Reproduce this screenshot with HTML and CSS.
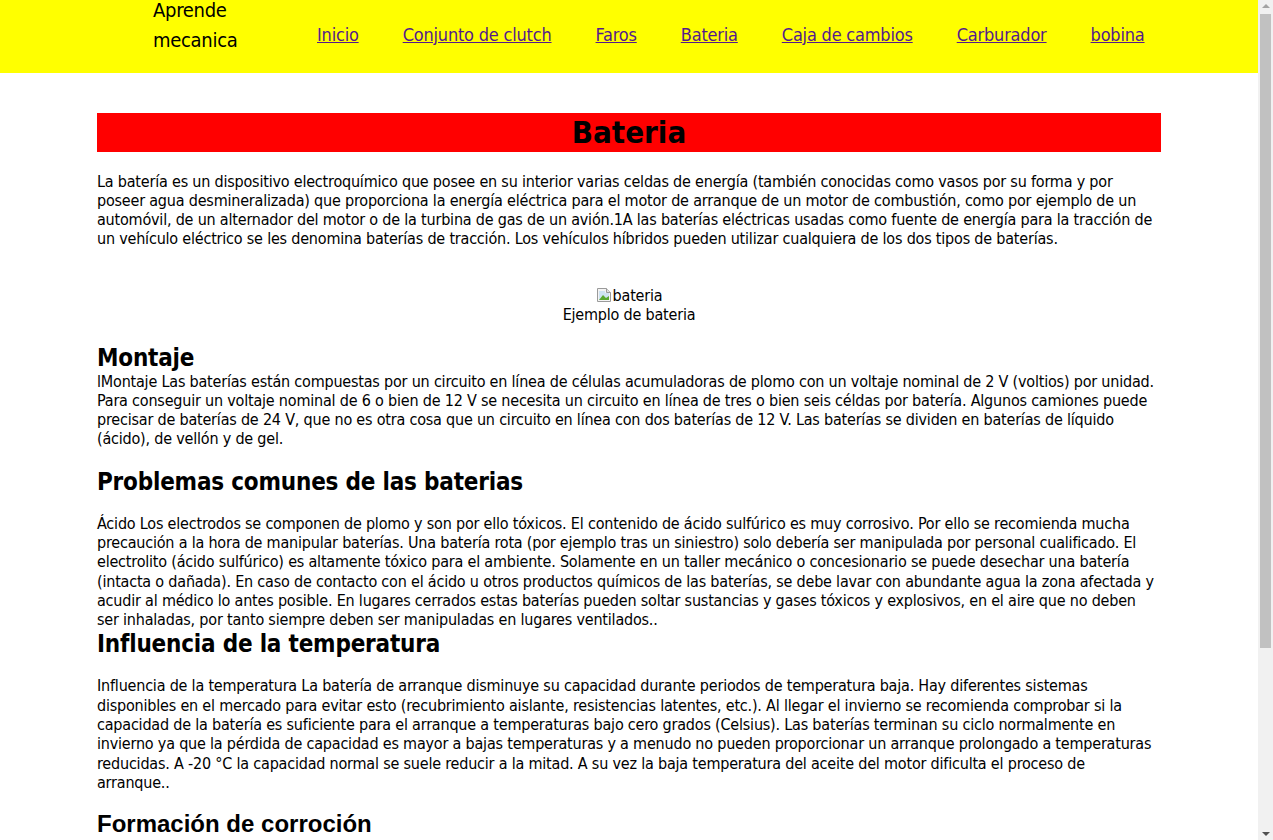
FILE: index.html
```html
<!DOCTYPE html>
<html lang="es">
<head>
<meta charset="utf-8">
<title>Bateria</title>
<link rel="stylesheet" href="styles.css">
</head>
<body>
<header class="topbar">
  <div class="brand">Aprende mecanica</div>
  <nav class="nav">
    <a href="#" class="nav-link">Inicio</a>
    <a href="#" class="nav-link">Conjunto de clutch</a>
    <a href="#" class="nav-link">Faros</a>
    <a href="#" class="nav-link">Bateria</a>
    <a href="#" class="nav-link">Caja de cambios</a>
    <a href="#" class="nav-link">Carburador</a>
    <a href="#" class="nav-link">bobina</a>
  </nav>
</header>
<main class="content">
  <h1 class="title">Bateria</h1>
  <p class="text">La batería es un dispositivo electroquímico que posee en su interior varias celdas de energía (también conocidas como vasos por su forma y por poseer agua desmineralizada) que proporciona la energía eléctrica para el motor de arranque de un motor de combustión, como por ejemplo de un automóvil, de un alternador del motor o de la turbina de gas de un avión.1A las baterías eléctricas usadas como fuente de energía para la tracción de un vehículo eléctrico se les denomina baterías de tracción. Los vehículos híbridos pueden utilizar cualquiera de los dos tipos de baterías.</p>
  <figure class="figure">
    <span class="broken"><svg class="broken-icon" width="16" height="16" viewBox="0 0 16 16"><path d="M1.5 1.5h9l4 4v9h-13z" fill="#f4f4f4" stroke="#9a9a9a"/><path d="M10.5 1.5v4h4" fill="#e0e0e0" stroke="#9a9a9a"/><path d="M3 4h6v2h4v7H3z" fill="#cfe3f3"/><path d="M3 13l4-5 3 3 3-2v4z" fill="#5aa830"/></svg>bateria</span>
    <figcaption>Ejemplo de bateria</figcaption>
  </figure>
  <h2 class="subtitle subtitle--tight-bottom">Montaje</h2>
  <p class="text">lMontaje Las baterías están compuestas por un circuito en línea de células acumuladoras de plomo con un voltaje nominal de 2 V (voltios) por unidad. Para conseguir un voltaje nominal de 6 o bien de 12 V se necesita un circuito en línea de tres o bien seis céldas por batería. Algunos camiones puede precisar de baterías de 24 V, que no es otra cosa que un circuito en línea con dos baterías de 12 V. Las baterías se dividen en baterías de líquido (ácido), de vellón y de gel.</p>
  <h2 class="subtitle">Problemas comunes de las baterias</h2>
  <p class="text">Ácido Los electrodos se componen de plomo y son por ello tóxicos. El contenido de ácido sulfúrico es muy corrosivo. Por ello se recomienda mucha precaución a la hora de manipular baterías. Una batería rota (por ejemplo tras un siniestro) solo debería ser manipulada por personal cualificado. El electrolito (ácido sulfúrico) es altamente tóxico para el ambiente. Solamente en un taller mecánico o concesionario se puede desechar una batería (intacta o dañada). En caso de contacto con el ácido u otros productos químicos de las baterías, se debe lavar con abundante agua la zona afectada y acudir al médico lo antes posible. En lugares cerrados estas baterías pueden soltar sustancias y gases tóxicos y explosivos, en el aire que no deben ser inhaladas, por tanto siempre deben ser manipuladas en lugares ventilados..</p>
  <h2 class="subtitle subtitle--tight-top">Influencia de la temperatura</h2>
  <p class="text">Influencia de la temperatura La batería de arranque disminuye su capacidad durante periodos de temperatura baja. Hay diferentes sistemas disponibles en el mercado para evitar esto (recubrimiento aislante, resistencias latentes, etc.). Al llegar el invierno se recomienda comprobar si la capacidad de la batería es suficiente para el arranque a temperaturas bajo cero grados (Celsius). Las baterías terminan su ciclo normalmente en invierno ya que la pérdida de capacidad es mayor a bajas temperaturas y a menudo no pueden proporcionar un arranque prolongado a temperaturas reducidas. A -20 °C la capacidad normal se suele reducir a la mitad. A su vez la baja temperatura del aceite del motor dificulta el proceso de arranque..</p>
  <h2 class="subtitle subtitle--alt">Formación de corroción</h2>
  <p class="text">Formación de corroción Los bornes de la batería pueden presentar corrosión con el paso del tiempo. Es recomendable limpiarlos periódicamente y aplicar una capa protectora para evitar fallos en el arranque.</p>
</main>
<div class="scrollbar" aria-hidden="true">
  <span class="scrollbar-arrow scrollbar-arrow--up"></span>
  <span class="scrollbar-thumb"></span>
  <span class="scrollbar-arrow scrollbar-arrow--down"></span>
</div>
</body>
</html>
```

FILE: styles.css
```css
html, body {
  padding: 0;
}

html {
  margin: 0;
}

body {
  margin: 0 15px 0 0;
  font-family: "DejaVu Sans Condensed", "DejaVu Sans", sans-serif;
  font-size: 16px;
  letter-spacing: -0.2px;
  color: #000;
  background: #fff;
}

.topbar {
  height: 73px;
  background: #ffff00;
  display: flex;
  align-items: center;
  padding-left: 153px;
  padding-bottom: 4px;
  box-sizing: border-box;
}

.brand {
  flex: 0 0 164px;
  box-sizing: border-box;
  padding-right: 64px;
  align-self: flex-start;
  margin-top: -5px;
  font-size: 20px;
  line-height: 30px;
  letter-spacing: -0.3px;
}

.nav {
  display: flex;
  gap: 44px;
  font-size: 18px;
  line-height: 22px;
}

.nav-link {
  color: #551a8b;
  text-decoration: underline;
}

.content {
  width: 1064px;
  margin: 0 auto;
  padding-top: 40px;
}

.title {
  margin: 0 0 19.5px;
  height: 39px;
  line-height: 39px;
  font-size: 31px;
  font-weight: bold;
  letter-spacing: 0;
  text-align: center;
  background: #ff0000;
}

.text {
  margin: 0;
  line-height: 19.3px;
}

.figure {
  margin: 37px 0 0;
  text-align: center;
  line-height: 19.4px;
}

.broken-icon {
  vertical-align: -2px;
  margin-right: 1px;
}

.subtitle {
  margin: 18px 0;
  padding-top: 1px;
  font-size: 24px;
  line-height: 28px;
  font-weight: bold;
}

.subtitle--tight-bottom {
  margin-bottom: 0;
}

.subtitle--tight-top {
  margin-top: 0;
}

.subtitle--alt {
  font-family: "Liberation Sans", Arial, sans-serif;
  letter-spacing: 0;
  margin-top: 17px;
}

.scrollbar {
  position: fixed;
  top: 0;
  right: 0;
  width: 15px;
  height: 100vh;
  background: #f1f1f1;
  display: flex;
  flex-direction: column;
  align-items: center;
}

.scrollbar-arrow {
  width: 0;
  height: 0;
  border-left: 4px solid transparent;
  border-right: 4px solid transparent;
  margin: 4px 0;
}

.scrollbar-arrow--up {
  border-bottom: 4px solid #a3a3a3;
}

.scrollbar-arrow--down {
  border-top: 4px solid #505050;
  margin-top: auto;
}

.scrollbar-thumb {
  width: 11px;
  height: 634px;
  background: #c1c1c1;
  margin-top: 2px;
}
```
